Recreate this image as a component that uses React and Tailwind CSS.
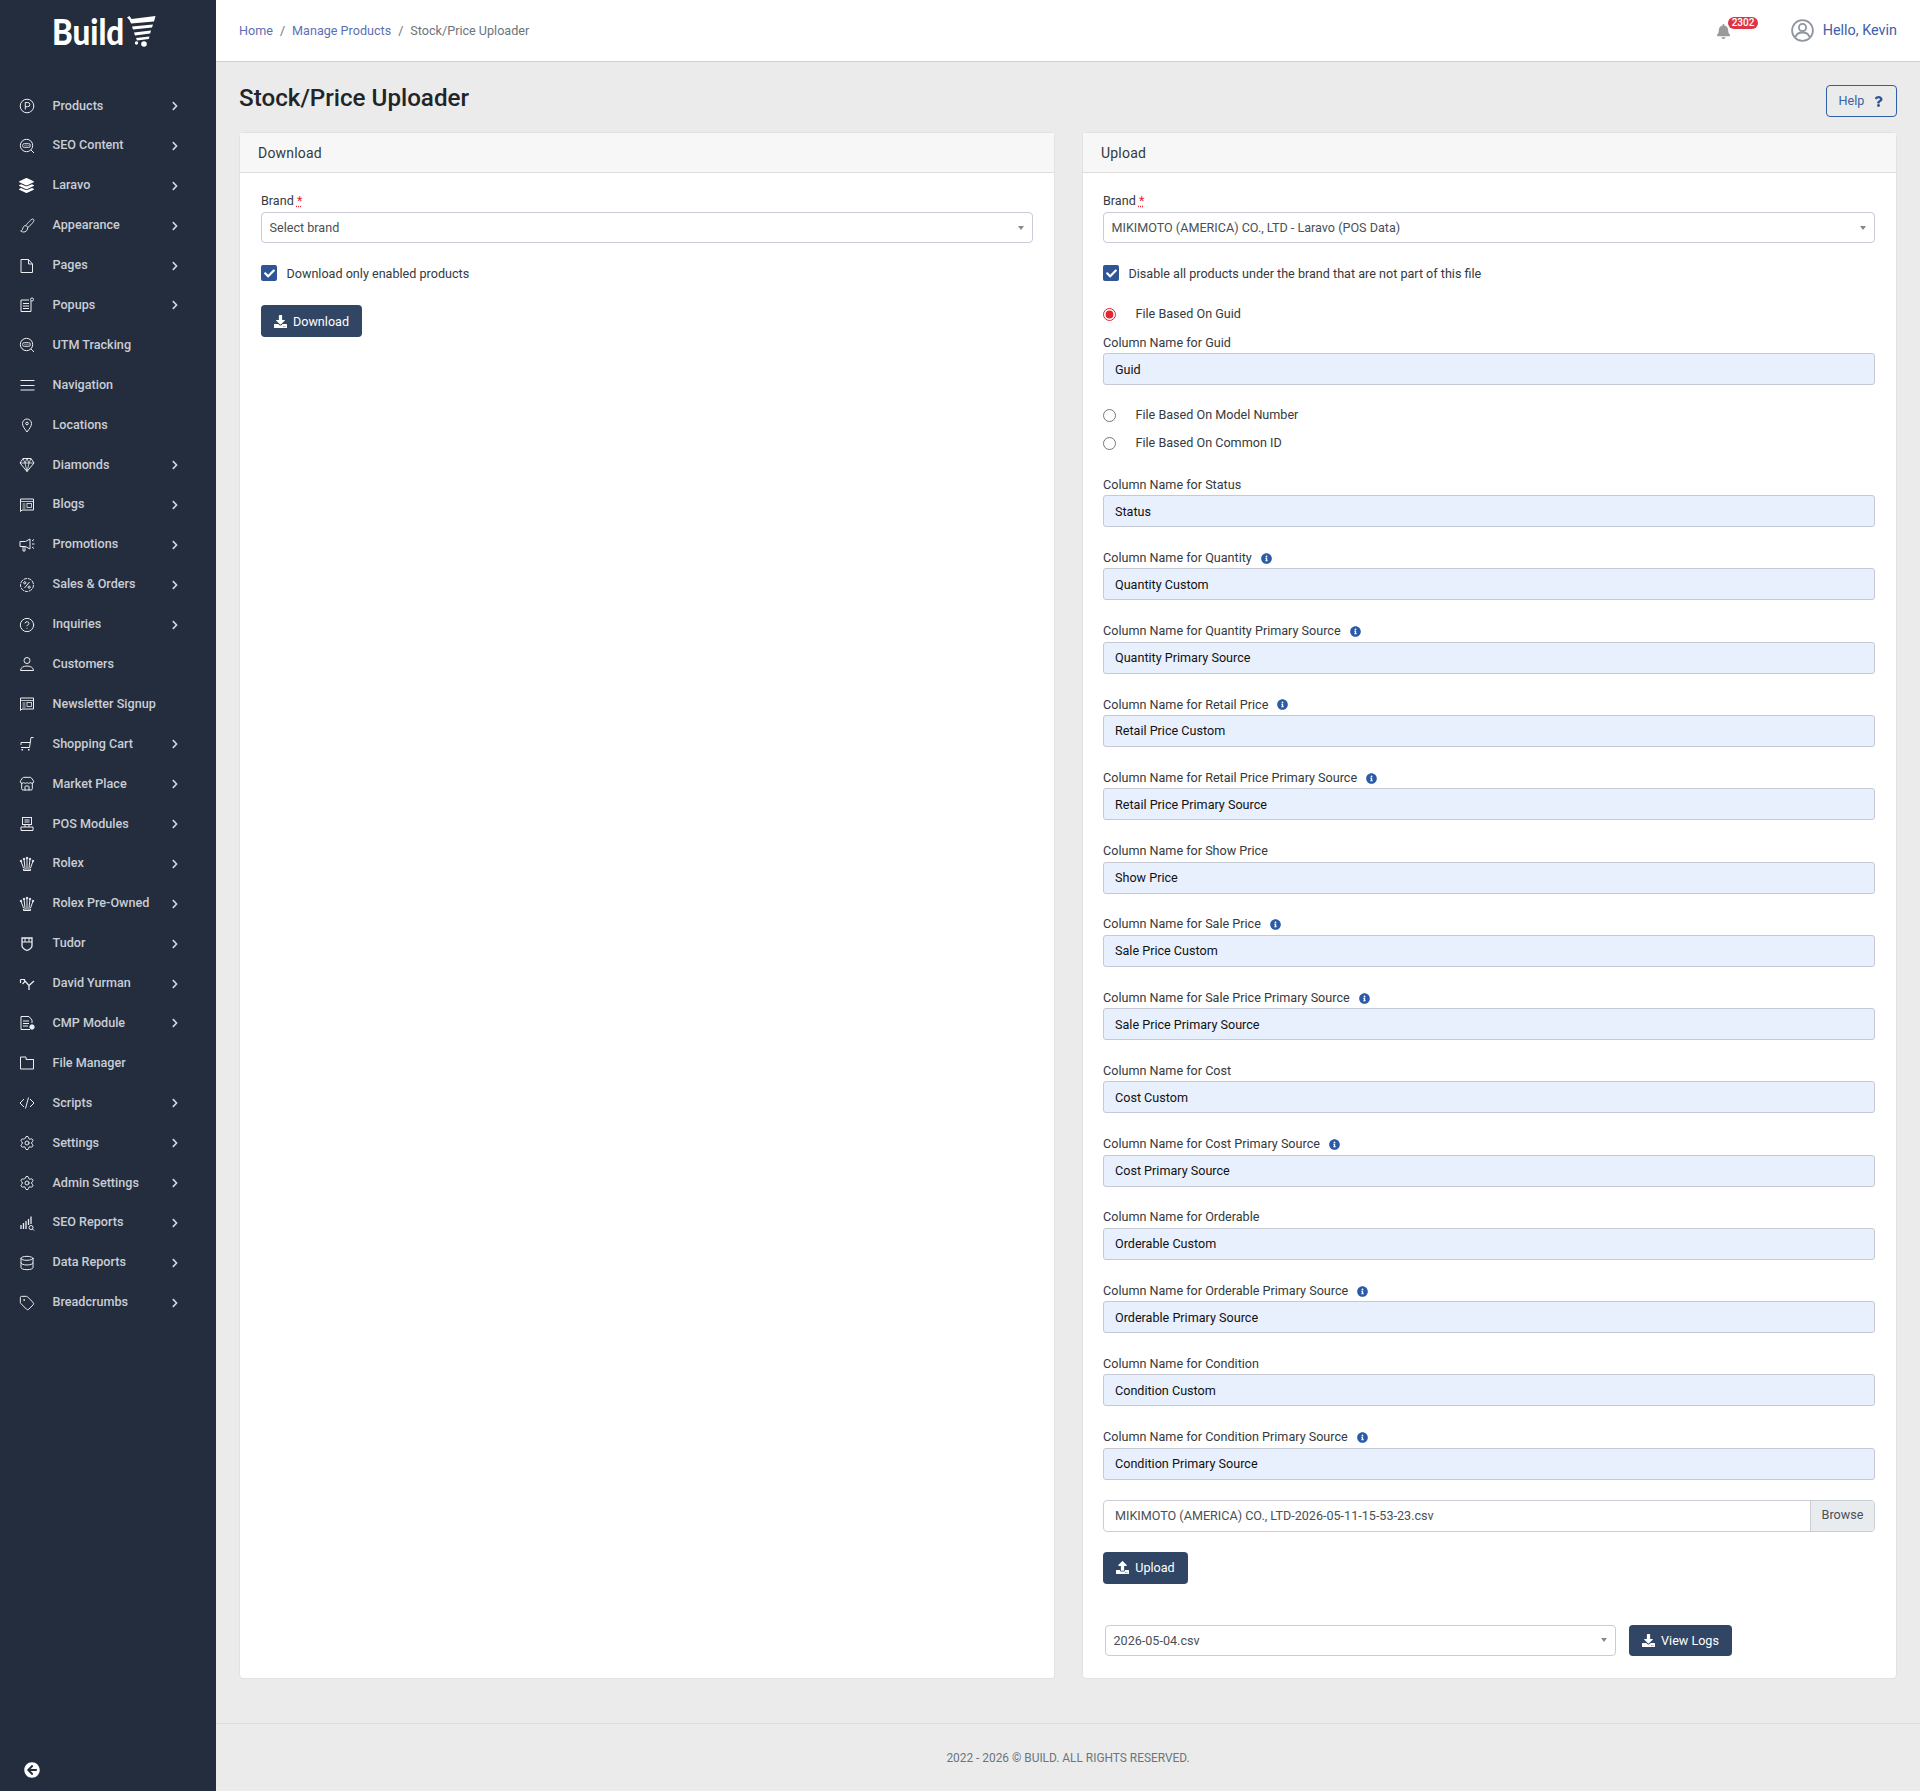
import { CircleHelp, Database, Settings, Store, Tag } from "lucide-react";
import {
  FaArrowCircleLeft,
  FaBell,
  FaCheck,
  FaChevronRight,
  FaDownload,
  FaInfoCircle,
  FaLayerGroup,
  FaQuestion,
  FaUpload,
} from "react-icons/fa";

const Svg = ({ children }) => (
  <svg width="16" height="16" viewBox="0 0 16 16" fill="none" stroke="currentColor" strokeWidth="1">
    {children}
  </svg>
);

const Luc = (Icon) => <Icon size={16} strokeWidth={1.5} />;

const SeoIcon = (
  <Svg>
    <circle cx="7.5" cy="7.5" r="6.200" />
    <path d="M12 12l3 3" />
    <rect x="3.500" y="5.500" width="8" height="4" rx="2" strokeWidth="0.8" />
    <path d="M6 6.500v2M8 6.500v2M10 6.500v2" strokeWidth="0.7" />
  </Svg>
);

const BlogIcon = (
  <Svg>
    <path d="M1.500 2h13v11H3l-1.500 1.500z" />
    <path d="M1.500 4.500h13M3.500 7h3M3.500 9h3M3.500 11h3" strokeWidth="0.8" />
    <rect x="8" y="6.500" width="4.500" height="4" strokeWidth="0.8" />
  </Svg>
);

const CrownIcon = (
  <Svg>
    <path d="M4.500 13h7v1.500h-7zM4.500 12L2 5M6 12L5 3M8 12V2M10 12l1-9M11.500 12L14 5" />
    <circle cx="8" cy="2" r="0.8" fill="currentColor" />
    <circle cx="5" cy="3" r="0.8" fill="currentColor" />
    <circle cx="11" cy="3" r="0.8" fill="currentColor" />
    <circle cx="2" cy="5" r="0.8" fill="currentColor" />
    <circle cx="14" cy="5" r="0.8" fill="currentColor" />
  </Svg>
);

const GearIcon = Luc(Settings);

const navItems = [
  {
    label: "Products",
    arrow: true,
    icon: (
      <Svg>
        <circle cx="8" cy="8" r="6.800" />
        <path d="M6.300 11.500v-7h2.400a2 2 0 0 1 0 4.200H6.300" />
      </Svg>
    ),
  },
  { label: "SEO Content", arrow: true, icon: SeoIcon },
  { label: "Laravo", arrow: true, icon: <FaLayerGroup size={15} className="text-white" /> },
  {
    label: "Appearance",
    arrow: true,
    icon: (
      <Svg>
        <path d="M13.500 1c-1 0-5 4-6.500 6.500l1.800 1.800C11.300 7.800 15 3.500 15 2.500 15 1.700 14.300 1 13.500 1z" />
        <path d="M7 7.500c-2.500.3-3 1.800-3.300 3.300-.2 1-.8 1.800-2 2.200 2 1.700 6.800 1.700 7.100-3.700" />
      </Svg>
    ),
  },
  {
    label: "Pages",
    arrow: true,
    icon: (
      <Svg>
        <path d="M2 1.500h7.500l4 4.500v8.500H2z" />
        <path d="M9.500 1.500V6h4" />
      </Svg>
    ),
  },
  {
    label: "Popups",
    arrow: true,
    icon: (
      <Svg>
        <path d="M12 4v10.500H2V3h8" />
        <circle cx="13" cy="2.500" r="1.500" />
        <path d="M4 6.500h6M4 9h6M4 11.500h6" />
      </Svg>
    ),
  },
  { label: "UTM Tracking", icon: SeoIcon },
  {
    label: "Navigation",
    icon: (
      <Svg>
        <path d="M1.500 3.500h14M1.500 8.500h14M1.500 13h14" strokeWidth="1.200" />
      </Svg>
    ),
  },
  {
    label: "Locations",
    icon: (
      <Svg>
        <path d="M8 15C5.500 11.500 3.500 9.300 3.500 6.500a4.500 4.500 0 0 1 9 0C12.500 9.300 10.500 11.500 8 15z" />
        <circle cx="8" cy="6.500" r="1.300" />
      </Svg>
    ),
  },
  {
    label: "Diamonds",
    arrow: true,
    icon: (
      <Svg>
        <path d="M4 1.500h8l3 4.500-7 8.500L1 6z" />
        <path d="M1 6h14M4 1.500L6 6l2-4.500L10 6l2-4.500M6 6l2 8.500L10 6" strokeWidth="0.8" />
      </Svg>
    ),
  },
  { label: "Blogs", arrow: true, icon: BlogIcon },
  {
    label: "Promotions",
    arrow: true,
    icon: (
      <Svg>
        <path d="M1 4.500h5.500L11 2v10L6.500 9.500H1z" />
        <path d="M4 9.500V14h2V9.500M13 4l2-1.500M13 7h2.500M13 10l2 1.500" />
      </Svg>
    ),
  },
  {
    label: "Sales & Orders",
    arrow: true,
    icon: (
      <Svg>
        <circle cx="8" cy="8" r="6.500" strokeDasharray="3.600 0.800" />
        <path d="M5.500 11l5-6" />
        <circle cx="5.800" cy="5.800" r="1.100" />
        <circle cx="10.200" cy="10.200" r="1.100" />
      </Svg>
    ),
  },
  { label: "Inquiries", arrow: true, icon: Luc(CircleHelp) },
  {
    label: "Customers",
    icon: (
      <Svg>
        <circle cx="8" cy="4.500" r="3" />
        <path d="M1.500 14.500c0-6 13-6 13 0z" />
      </Svg>
    ),
  },
  { label: "Newsletter Signup", icon: BlogIcon },
  {
    label: "Shopping Cart",
    arrow: true,
    icon: (
      <Svg>
        <path d="M14.500 1.500H12L10.500 11.500H2M2 6.500h9.300M2 9V6.500" />
        <path d="M2.500 13.800h1.500M9 13.800h1.500" strokeWidth="1.500" />
      </Svg>
    ),
  },
  { label: "Market Place", arrow: true, icon: Luc(Store) },
  {
    label: "POS Modules",
    arrow: true,
    icon: (
      <Svg>
        <rect x="3.500" y="1.500" width="9" height="7" />
        <path d="M5.500 4h5M5.500 6h5M3 8.500h10M2 11h12v3.500H2zM6 9v2M10 9v2" />
      </Svg>
    ),
  },
  { label: "Rolex", arrow: true, icon: CrownIcon },
  { label: "Rolex Pre-Owned", arrow: true, icon: CrownIcon },
  {
    label: "Tudor",
    arrow: true,
    icon: (
      <Svg>
        <path d="M3 2h10v7.500c0 2.500-2.500 4-5 5-2.500-1-5-2.500-5-5z" strokeWidth="1.300" />
        <path d="M3 6h10M6 2v4M10 2v4" />
      </Svg>
    ),
  },
  {
    label: "David Yurman",
    arrow: true,
    icon: (
      <Svg>
        <path d="M1.500 3.500h4v2.500l-2 2M1.500 3.500V7" strokeWidth="1.200" />
        <path d="M6 5l4 4.500V14M15 5l-5 4.500" strokeWidth="1.300" />
      </Svg>
    ),
  },
  {
    label: "CMP Module",
    arrow: true,
    icon: (
      <Svg>
        <path d="M13 8V5L10 1.500H2v13h9" />
        <path d="M4 6h6M4 8.500h6M4 11h5" />
        <circle cx="13" cy="12" r="2.200" fill="currentColor" />
      </Svg>
    ),
  },
  {
    label: "File Manager",
    icon: (
      <Svg>
        <path d="M1.500 2h5.500v2.500h7.500v9.500h-13z" />
        <path d="M7 4.500h7.500V7" />
      </Svg>
    ),
  },
  {
    label: "Scripts",
    arrow: true,
    icon: (
      <Svg>
        <path d="M5 4L1 8l4 4M11 4l4 4-4 4M9.500 2.500l-3 11" />
      </Svg>
    ),
  },
  { label: "Settings", arrow: true, icon: GearIcon },
  { label: "Admin Settings", arrow: true, icon: GearIcon },
  {
    label: "SEO Reports",
    arrow: true,
    icon: (
      <Svg>
        <path d="M2 14V10M4.500 14V8M7 14V6M9.500 10V4M12 9V1.500" strokeWidth="1.300" />
        <circle cx="12" cy="12.500" r="2" />
        <path d="M13.500 14l1.500 1.500" />
      </Svg>
    ),
  },
  { label: "Data Reports", arrow: true, icon: Luc(Database) },
  { label: "Breadcrumbs", arrow: true, icon: Luc(Tag) },
];

const fields = [
  ["Status", "Status", false],
  ["Quantity", "Quantity Custom", true],
  ["Quantity Primary Source", "Quantity Primary Source", true],
  ["Retail Price", "Retail Price Custom", true],
  ["Retail Price Primary Source", "Retail Price Primary Source", true],
  ["Show Price", "Show Price", false],
  ["Sale Price", "Sale Price Custom", true],
  ["Sale Price Primary Source", "Sale Price Primary Source", true],
  ["Cost", "Cost Custom", false],
  ["Cost Primary Source", "Cost Primary Source", true],
  ["Orderable", "Orderable Custom", false],
  ["Orderable Primary Source", "Orderable Primary Source", true],
  ["Condition", "Condition Custom", false],
  ["Condition Primary Source", "Condition Primary Source", true],
];

function Sidebar() {
  return (
    <aside className="relative w-[216px] shrink-0 bg-[#242d3d]">
      <div className="flex h-[86px] items-start pl-[52px] pt-[11px] text-white">
        <span className="w-[72px] origin-left scale-x-[0.87] font-['Lato',sans-serif] text-[36px] font-black leading-[40px]">
          Build
        </span>
        <svg width="30" height="31" viewBox="0 0 30 31" className="ml-[2px] mt-[5px]" fill="white">
          <path d="M1 1.500l2.500-1.500 2 3L29.500 0 28 5.500 5 7.500 3.500 4z" />
          <path d="M6 10.500l21-2-1 3-19 2zM8 16.500l17-2-.8 3L9 19.500zM10 22l13.500-1.500-.7 2.500L11 24.500z" />
          <circle cx="10.500" cy="27" r="1.700" />
          <circle cx="18" cy="28" r="2.800" />
        </svg>
      </div>
      <nav>
        {navItems.map((item) => (
          <a
            key={item.label}
            className="flex h-[39.900px] items-center pl-[19px] text-[12.600px] font-medium text-[#c9ced6]"
          >
            <span className="flex w-[33.500px] shrink-0 items-center text-[#eceef1]">{item.icon}</span>
            <span className="flex-1 whitespace-nowrap">{item.label}</span>
            {item.arrow && <FaChevronRight size={10} className="mr-[36px] text-[#d5d8de]" />}
          </a>
        ))}
      </nav>
      <FaArrowCircleLeft size={16} className="absolute left-[24px] top-[1762px] text-white" />
    </aside>
  );
}

function Header() {
  return (
    <header className="flex h-[63px] items-center border-b border-[#cfcfcf] bg-white px-[23px] text-[12.600px]">
      <div className="flex flex-1 items-center pt-[2px] text-[#6c757d]">
        <a className="text-[#5c6fb5]">Home</a>
        <span className="mx-[7px]">/</span>
        <a className="text-[#5c6fb5]">Manage Products</a>
        <span className="mx-[7px]">/</span>
        <span>Stock/Price Uploader</span>
      </div>
      <div className="relative mr-[60px] h-[20px] w-[15px] text-[#9a9a9a]">
        <FaBell size={15} className="mt-[3px]" />
        <span className="absolute left-[12px] top-[-4px] h-[12px] rounded-full bg-[#dc3545] px-[4px] text-[10px] font-medium leading-[12px] text-white">
          2302
        </span>
      </div>
      <svg width="23" height="23" viewBox="0 0 23 23" className="mr-[9px] text-[#8f96a0]" fill="none" stroke="currentColor">
        <circle cx="11.500" cy="11.500" r="10.400" strokeWidth="1.800" />
        <circle cx="11.500" cy="8.500" r="3.600" strokeWidth="1.800" />
        <path d="M4.500 18c1-3.500 3.500-4.500 7-4.500s6 1 7 4.500" strokeWidth="1.800" />
      </svg>
      <span className="pt-[1px] text-[14.400px] text-[#3f5ea8]">Hello, Kevin</span>
    </header>
  );
}

function Checkbox({ label }) {
  return (
    <div className="flex h-[16px] items-center">
      <span className="flex h-[16px] w-[16px] items-center justify-center rounded-[2px] bg-[#2f5597] text-white">
        <FaCheck size={11} />
      </span>
      <span className="ml-[9.500px] pt-[2px] text-[12.600px] text-[#343a40]">{label}</span>
    </div>
  );
}

function Radio({ label, checked }) {
  return (
    <label className="flex h-[20px] items-center text-[12.600px] text-[#343a40]">
      <input
        type="radio"
        readOnly
        checked={!!checked}
        className="m-0 mt-[3px] h-[13px] w-[13px] accent-[#e3262f]"
      />
      <span className="ml-[19.500px] pt-[2px]">{label}</span>
    </label>
  );
}

function FakeSelect({ value, className }) {
  return (
    <div
      className={`flex h-[31px] items-center justify-between rounded-[4px] border border-[#c9cbd8] bg-white pl-[7.500px] pr-[8px] text-[12.600px] text-[#495057] ${className || ""}`}
    >
      <span className="pt-[2px]">{value}</span>
      <span className="h-0 w-0 border-x-[3.500px] border-t-[4.500px] border-x-transparent border-t-[#888888]" />
    </div>
  );
}

function ColumnField({ name, value, info, className }) {
  return (
    <div className={className}>
      <div className="mb-[1px] flex h-[20px] items-center pt-[2px] text-[12.600px] text-[#343a40]">
        Column Name for {name}
        {info && <FaInfoCircle size={11} className="ml-[9px] text-[#2a5ba8]" />}
      </div>
      <input
        readOnly
        value={value}
        className="block h-[32px] w-full rounded-[3px] border border-[#c5c9d3] bg-[#e8f0fe] px-[11px] text-[12.600px] text-[#111111] outline-none"
      />
    </div>
  );
}

function BrandLabel() {
  return (
    <div className="mb-[2px] h-[20px] pt-[1px] text-[12.600px] leading-[20px] text-[#343a40]">
      Brand <span className="text-[#e3262f] underline decoration-dotted">*</span>
    </div>
  );
}

function DarkButton({ icon, children, className }) {
  return (
    <button
      type="button"
      className={`flex items-center justify-center gap-[6px] rounded-[4px] bg-[#314564] text-[12.600px] text-white ${className}`}
    >
      {icon}
      <span className="pt-[2px]">{children}</span>
    </button>
  );
}

function Card({ title, className, bodyClass, children }) {
  return (
    <section className={`min-w-0 rounded-[4px] border border-[#e2e2e2] bg-white ${className}`}>
      <div className="flex h-[40px] items-center border-b border-[#dedede] bg-[#f7f7f7] pl-[18px] pt-[2px] text-[14px] tracking-[0.2px] text-[#343a40]">
        {title}
      </div>
      <div className={`pb-[22px] pt-[17.500px] ${bodyClass}`}>{children}</div>
    </section>
  );
}

export default function App() {
  return (
    <div className="flex h-[1791px] bg-[#ebebeb] font-['Roboto',sans-serif]">
      <Sidebar />
      <div className="flex min-w-0 flex-1 flex-col">
        <Header />
        <main className="px-[23px]">
          <div className="flex h-[69.500px] items-start justify-between">
            <h1 className="mt-[21px] text-[24.200px] font-medium leading-[30px] text-[#212529]">Stock/Price Uploader</h1>
            <button
              type="button"
              className="mt-[23px] flex h-[32px] w-[71px] items-center justify-center gap-[9px] rounded-[4px] border border-[#2f5fa5] text-[12.600px] text-[#3a62a5]"
            >
              Help <FaQuestion size={11} className="text-[#2f5597]" />
            </button>
          </div>
          <div className="flex items-stretch gap-[27px]">
            <Card title="Download" className="w-[816px] shrink-0" bodyClass="px-[21px]">
              <BrandLabel />
              <FakeSelect value="Select brand" />
              <div className="mt-[22px]">
                <Checkbox label="Download only enabled products" />
              </div>
              <DarkButton icon={<FaDownload size={13} />} className="mt-[24px] h-[32px] w-[101px]">
                Download
              </DarkButton>
            </Card>
            <Card title="Upload" className="flex-1" bodyClass="pl-[20px] pr-[21px]">
              <BrandLabel />
              <FakeSelect value="MIKIMOTO (AMERICA) CO., LTD - Laravo (POS Data)" />
              <div className="mt-[22px]">
                <Checkbox label="Disable all products under the brand that are not part of this file" />
              </div>
              <div className="mt-[22px]">
                <Radio label="File Based On Guid" checked />
              </div>
              <ColumnField name="Guid" value="Guid" className="mt-[9px]" />
              <div className="mt-[19px]">
                <Radio label="File Based On Model Number" />
              </div>
              <div className="mt-[8px]">
                <Radio label="File Based On Common ID" />
              </div>
              <div className="mt-[22px]">
                {fields.map(([name, value, info]) => (
                  <ColumnField key={name} name={name} value={value} info={info} className="mb-[20.280px]" />
                ))}
              </div>
              <div className="flex h-[32px] overflow-hidden rounded-[4px] border border-[#ccced6] text-[12.600px]">
                <div className="flex flex-1 items-center pl-[11px] pt-[2px] text-[#495057]">
                  MIKIMOTO (AMERICA) CO., LTD-2026-05-11-15-53-23.csv
                </div>
                <div className="flex w-[64px] items-center justify-center border-l border-[#ccced6] bg-[#e9ecef] text-[#495057]">
                  Browse
                </div>
              </div>
              <DarkButton icon={<FaUpload size={13} />} className="mt-[20px] h-[32px] w-[85px]">
                Upload
              </DarkButton>
              <div className="mt-[41px] flex items-start">
                <FakeSelect value="2026-05-04.csv" className="ml-[2px] w-[511px]" />
                <DarkButton icon={<FaDownload size={13} />} className="ml-[13px] h-[31px] w-[103px]">
                  View Logs
                </DarkButton>
              </div>
            </Card>
          </div>
        </main>
        <footer className="mt-[44px] flex h-[69px] items-center justify-center border-t border-[#dedede] pt-[2px] text-[11.900px] text-[#6c757d]">
          2022 - 2026 © BUILD. ALL RIGHTS RESERVED.
        </footer>
      </div>
    </div>
  );
}
